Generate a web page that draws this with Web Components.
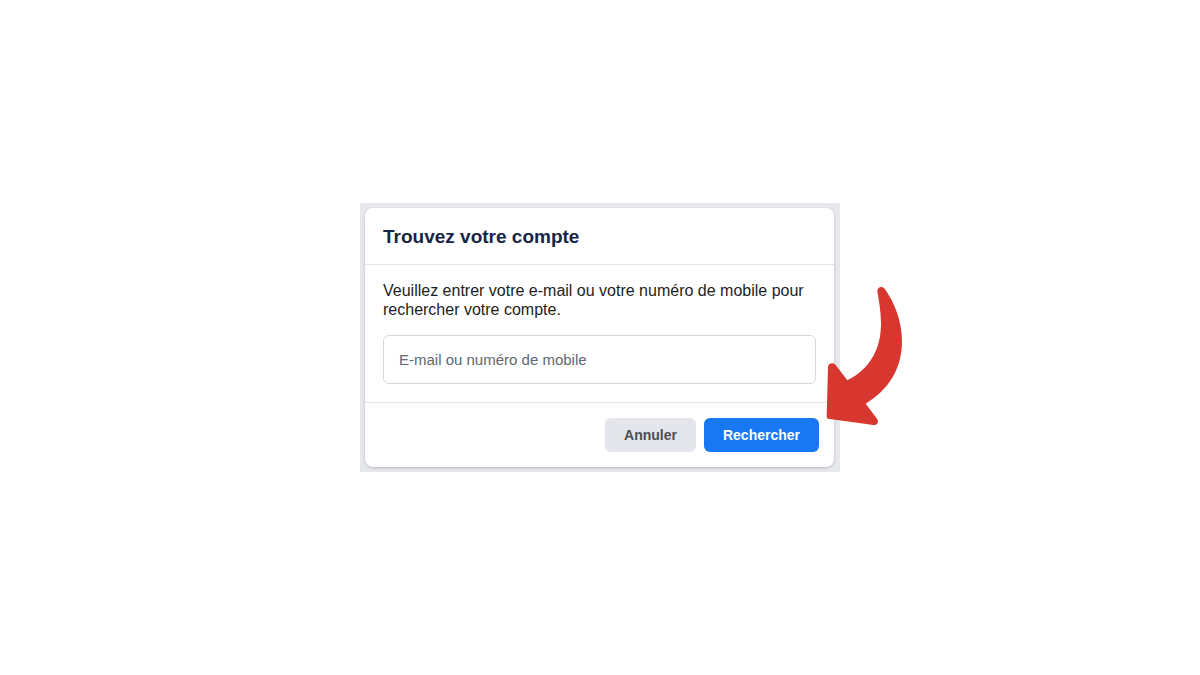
<!DOCTYPE html>
<html lang="fr">
<head>
<meta charset="utf-8">
<meta name="viewport" content="width=device-width, initial-scale=1">
<title>Trouvez votre compte</title>
<style>
  body {
    margin: 0;
    background: #fff;
    font-family: "Liberation Sans", Arial, sans-serif;
  }
</style>
</head>
<body>
<recovery-page>
  <account-dialog>
    <span slot="title">Trouvez votre compte</span>
    <account-field name="email" label="Veuillez entrer votre e-mail ou votre numéro de mobile pour rechercher votre compte." placeholder="E-mail ou numéro de mobile"></account-field>
    <action-button slot="actions">Annuler</action-button>
    <action-button slot="actions" variant="primary">Rechercher</action-button>
  </account-dialog>
  <pointer-arrow slot="pointer"></pointer-arrow>
</recovery-page>

<script>
  class BaseElement extends HTMLElement {
    constructor() {
      super();
      const template = document.createElement('template');
      template.innerHTML = this.constructor.markup;
      this.attachShadow({ mode: 'open' }).append(template.content.cloneNode(true));
    }
  }

  customElements.define('recovery-page', class extends BaseElement {
    static markup = `
      <style>
        :host {
          display: flex;
          align-items: center;
          justify-content: center;
          min-height: 100vh;
        }
        main {
          position: relative;
          box-sizing: border-box;
          width: 100%;
          max-width: 480px;
          padding: 5px 6px 5px 5px;
          background: #e7e8ec;
        }
      </style>
      <main>
        <slot></slot>
        <slot name="pointer"></slot>
      </main>`;
  });

  customElements.define('account-dialog', class extends BaseElement {
    static markup = `
      <style>
        :host {
          display: block;
          background: #fff;
          border-radius: 8px;
          box-shadow: 0 1px 3px rgba(0, 0, 0, .2);
        }
        header {
          padding: 17px 18px 15px;
          border-bottom: 1px solid #e4e6ea;
        }
        h1 {
          margin: 0;
          font-size: 19px;
          line-height: 24px;
          color: #162447;
        }
        .body { padding: 16px 18px 18px; }
        footer {
          display: flex;
          justify-content: flex-end;
          gap: 8px;
          padding: 15px;
          border-top: 1px solid #e4e6ea;
        }
      </style>
      <header><h1><slot name="title"></slot></h1></header>
      <div class="body"><slot></slot></div>
      <footer><slot name="actions"></slot></footer>`;
  });

  customElements.define('account-field', class extends BaseElement {
    static markup = `
      <style>
        :host { display: block; }
        label {
          display: block;
          margin-bottom: 16px;
          font-size: 16px;
          line-height: 19px;
          color: #1c1e21;
        }
        input {
          display: block;
          box-sizing: border-box;
          width: 100%;
          height: 49px;
          padding: 0 15px;
          border: 1px solid #d5d8dd;
          border-radius: 6px;
          background: #fff;
          font: 15px "Liberation Sans", Arial, sans-serif;
          color: #1c1e21;
        }
        input::placeholder { color: #606770; opacity: 1; }
      </style>
      <label for="field"></label>
      <input id="field" type="text">`;

    connectedCallback() {
      const input = this.shadowRoot.querySelector('input');
      this.shadowRoot.querySelector('label').textContent = this.getAttribute('label');
      input.placeholder = this.getAttribute('placeholder');
      input.name = this.getAttribute('name');
    }
  });

  customElements.define('action-button', class extends BaseElement {
    static markup = `
      <style>
        :host { display: block; }
        button {
          display: block;
          height: 34px;
          padding: 0 19px;
          border: 0;
          border-radius: 6px;
          background: #e4e6eb;
          color: #4b4f56;
          font: bold 14px "Liberation Sans", Arial, sans-serif;
          cursor: pointer;
        }
        :host([variant="primary"]) button { background: #1877f2; color: #fff; }
      </style>
      <button type="button"><slot></slot></button>`;
  });

  customElements.define('pointer-arrow', class extends BaseElement {
    static markup = `
      <style>
        :host {
          position: absolute;
          top: 72px;
          right: -75px;
          width: 100px;
          height: 160px;
          pointer-events: none;
        }
        svg { display: block; width: 100%; height: 100%; }
      </style>
      <svg viewBox="0 0 300 480" aria-hidden="true">
        <path fill="#d8372f" d="M187 49C186 36 201 31 209 41C239 83 261 138 261 198C261 284 219 345 152 386L186 431C193 441 187 451 175 450L39 431Q35 430 35 425L39 277C40 264 54 261 62 270L97 316C168 280 198 217 198 146C198 112 192 78 187 49Z"/>
      </svg>`;
  });
</script>
</body>
</html>
